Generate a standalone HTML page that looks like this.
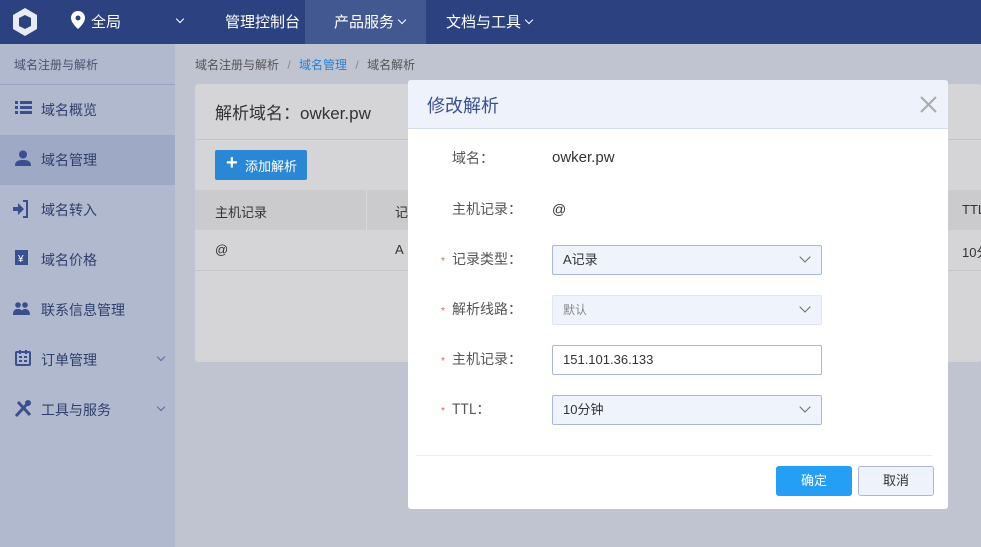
<!DOCTYPE html><html><head><meta charset="utf-8"><style>
*{margin:0;padding:0;box-sizing:border-box}
body{width:981px;height:547px;overflow:hidden;position:relative;background:#c0c4d0;font-family:"Liberation Sans","Noto Sans CJK SC",sans-serif;font-size:14px;color:#333}
.abs{position:absolute;white-space:nowrap}
.nav{left:0;top:0;width:981px;height:44px;background:#2b4180;color:#fff}
.nav span{position:absolute;top:11px;font-size:15px}
.side{left:0;top:44px;width:175px;height:503px;background:#b0b9cd}
.si{position:absolute;left:41px;font-size:14px;color:#2f3e6e}
.modal{left:408px;top:80px;width:540px;height:429px;background:#fff;border-radius:3px}
.lab{position:absolute;font-size:14px;color:#555;font-family:"Noto Sans CJK SC",sans-serif;line-height:20px}
.star{color:#e05a5a;font-size:10px;position:absolute}
.inp{position:absolute;left:144px;width:270px;height:30px;border:1px solid #a9b6de;border-radius:2px;background:#eff3fb;font-size:13px;color:#333;padding:0 10px;line-height:28px}
.chev{position:absolute;right:12px;top:7px;width:8px;height:8px;border-right:1.5px solid #666;border-bottom:1.5px solid #666;transform:rotate(45deg)}
.nch{display:inline-block;width:6px;height:6px;border-right:1.5px solid #fff;border-bottom:1.5px solid #fff;transform:rotate(45deg);margin-left:5px;position:relative;top:-4px}
</style></head><body>
<div class="abs nav">
<svg class="abs" style="left:11px;top:7px" width="28" height="30" viewBox="0 0 28 30"><path d="M14 1 L26 8 L26 22 L14 29 L2 22 L2 8Z" fill="#e8ebf3"/><path d="M8 11 L14 8 L20 11 L20 19 L14 22 L8 19Z" fill="#2b4180"/></svg>
<svg class="abs" style="left:71px;top:11px" width="14" height="18" viewBox="0 0 14 18"><path d="M7 0C3 0 0 3 0 7c0 5 7 11 7 11s7-6 7-11c0-4-3-7-7-7z" fill="#fff"/><circle cx="7" cy="7" r="2.5" fill="#2b4180"/></svg>
<span style="left:91px;font-size:15px">全局</span>
<span style="left:172px;top:13px"><i class="nch"></i></span>
<span style="left:225px">管理控制台</span>
<div class="abs" style="left:305px;top:0;width:121px;height:44px;background:#425891"></div>
<span style="left:334px">产品服务<i class="nch"></i></span>
<span style="left:446px">文档与工具<i class="nch"></i></span>
</div>
<div class="abs side">
<div class="abs" style="left:14px;top:12px;font-size:12px;color:#4a5270">域名注册与解析</div>
<div class="abs" style="left:0;top:40px;width:175px;height:1px;background:#97a3c6"></div>
<div class="abs" style="left:0;top:91px;width:175px;height:50px;background:#9ea9c6"></div>
</div>
<svg class="abs" style="left:15px;top:101px" width="17" height="14"><rect x="0" y="0" width="3" height="3" fill="#3a4f8f"/><rect x="5" y="0" width="12" height="3" fill="#3a4f8f"/><rect x="0" y="5" width="3" height="3" fill="#3a4f8f"/><rect x="5" y="5" width="12" height="3" fill="#3a4f8f"/><rect x="0" y="10" width="3" height="3" fill="#3a4f8f"/><rect x="5" y="10" width="12" height="3" fill="#3a4f8f"/></svg>
<svg class="abs" style="left:15px;top:150px" width="16" height="16"><circle cx="8" cy="4.5" r="4" fill="#3a4f8f"/><path d="M0 16c0-5 3-6 8-6s8 1 8 6z" fill="#3a4f8f"/></svg>
<svg class="abs" style="left:13px;top:200px" width="16" height="18"><path d="M0 7h5V3l6 6-6 6v-4H0z" fill="#3a4f8f"/><path d="M10 1h4v16h-4" stroke="#3a4f8f" stroke-width="2" fill="none"/></svg>
<svg class="abs" style="left:15px;top:250px" width="13" height="15"><rect width="13" height="15" fill="#3a4f8f"/><text x="3" y="12" font-size="10" fill="#fff">¥</text></svg>
<svg class="abs" style="left:13px;top:302px" width="17" height="13"><circle cx="5" cy="3" r="2.8" fill="#3a4f8f"/><circle cx="12" cy="3" r="2.8" fill="#3a4f8f"/><path d="M0 13c0-5 2-6 5-6s5 1 5 6zM8 13c0-5 2-6 4-6s5 1 5 6z" fill="#3a4f8f"/></svg>
<svg class="abs" style="left:15px;top:350px" width="16" height="16"><rect x="1" y="2" width="14" height="13" rx="1" stroke="#3a4f8f" stroke-width="2" fill="none"/><rect x="4" y="0" width="2" height="4" fill="#3a4f8f"/><rect x="10" y="0" width="2" height="4" fill="#3a4f8f"/><rect x="4" y="6" width="3" height="2" fill="#3a4f8f"/><rect x="9" y="6" width="3" height="2" fill="#3a4f8f"/><rect x="4" y="10" width="3" height="2" fill="#3a4f8f"/><rect x="9" y="10" width="3" height="2" fill="#3a4f8f"/></svg>
<svg class="abs" style="left:14px;top:400px" width="18" height="17"><path d="M2 16L14 3M4 2l12 13" stroke="#3a4f8f" stroke-width="3"/><circle cx="14" cy="3" r="3" fill="#3a4f8f"/></svg>
<div class="si" style="top:100px">域名概览</div>
<div class="si" style="top:150px">域名管理</div>
<div class="si" style="top:200px">域名转入</div>
<div class="si" style="top:250px">域名价格</div>
<div class="si" style="top:300px">联系信息管理</div>
<div class="si" style="top:350px">订单管理</div>
<div class="si" style="top:400px">工具与服务</div>
<div class="abs" style="left:158px;top:354px;width:6px;height:6px;border-right:1.5px solid #5a6aa0;border-bottom:1.5px solid #5a6aa0;transform:rotate(45deg)"></div>
<div class="abs" style="left:158px;top:404px;width:6px;height:6px;border-right:1.5px solid #5a6aa0;border-bottom:1.5px solid #5a6aa0;transform:rotate(45deg)"></div>
<div class="abs" style="left:195px;top:56px;font-size:12px;color:#555">域名注册与解析 <span style="color:#888;margin:0 5px">/</span> <span style="color:#2a7fd0">域名管理</span> <span style="color:#888;margin:0 5px">/</span> 域名解析</div>
<div class="abs" style="left:195px;top:84px;width:786px;height:278px;background:#d5d5d7;border-radius:3px"></div>
<div class="abs" style="left:195px;top:139px;width:786px;height:1px;background:#c4c4c8"></div>
<div class="abs" style="left:215px;top:100px;font-size:17px;color:#333;font-family:'Noto Sans CJK SC',sans-serif;line-height:24px">解析域名：<span style="font-family:'Liberation Sans'">owker.pw</span></div>
<div class="abs" style="left:215px;top:150px;width:92px;height:30px;background:#2a87d6;border-radius:2px;color:#fff;font-size:13px;padding:6px 0 0 30px">添加解析</div>
<div class="abs" style="left:226px;top:152px;color:#fff;font-size:20px;font-weight:bold">+</div>
<div class="abs" style="left:195px;top:190px;width:786px;height:40px;background:#cbcbce"></div>
<div class="abs" style="left:366px;top:190px;width:1px;height:40px;background:#d8d8da"></div>
<div class="abs" style="left:195px;top:270px;width:786px;height:1px;background:#c4c4c8"></div>
<div class="abs" style="left:215px;top:202px;font-size:13px">主机记录</div>
<div class="abs" style="left:395px;top:202px;font-size:13px">记</div>
<div class="abs" style="left:215px;top:242px;font-size:13px">@</div>
<div class="abs" style="left:395px;top:242px;font-size:13px">A</div>
<div class="abs" style="left:962px;top:202px;font-size:13px">TTL</div>
<div class="abs" style="left:962px;top:242px;font-size:13px">10分</div>
<div class="abs modal">
<div class="abs" style="left:0;top:0;width:540px;height:49px;background:#eef2fb;border-bottom:1px solid #d5dcee;border-radius:3px 3px 0 0"></div>
<div class="abs" style="left:19px;top:12px;font-size:18px;color:#3a4f8f;font-family:'Noto Sans CJK SC',sans-serif;line-height:26px">修改解析</div>
<svg class="abs" style="left:512px;top:16px" width="17" height="17"><path d="M1 1L16 16M16 1L1 16" stroke="#aaa" stroke-width="2"/></svg>
<div class="lab" style="left:44px;top:68px">域名：</div>
<div class="abs" style="left:144px;top:69px;font-size:15px">owker.pw</div>
<div class="lab" style="left:44px;top:119px">主机记录：</div>
<div class="abs" style="left:144px;top:121px;font-size:14px">@</div>
<span class="star" style="left:33px;top:176px">*</span><div class="lab" style="left:44px;top:169px">记录类型：</div>
<span class="star" style="left:33px;top:226px">*</span><div class="lab" style="left:44px;top:219px">解析线路：</div>
<span class="star" style="left:33px;top:276px">*</span><div class="lab" style="left:44px;top:269px">主机记录：</div>
<span class="star" style="left:33px;top:326px">*</span><div class="lab" style="left:44px;top:319px">TTL：</div>
<div class="inp" style="top:165px">A记录<div class="chev"></div></div>
<div class="inp" style="top:215px;border-color:#e2e6ef;color:#888;font-size:12px">默认<div class="chev"></div></div>
<div class="inp" style="top:265px;background:#fff">151.101.36.133</div>
<div class="inp" style="top:315px">10分钟<div class="chev"></div></div>
<div class="abs" style="left:8px;top:375px;width:516px;height:1px;background:#ecedf0"></div>
<div class="abs" style="left:368px;top:386px;width:76px;height:30px;background:#249ff5;border-radius:3px;color:#fff;font-size:13px;text-align:center;line-height:30px">确定</div>
<div class="abs" style="left:450px;top:386px;width:76px;height:30px;background:#eef2fb;border:1px solid #a9b6de;border-radius:3px;color:#333;font-size:13px;text-align:center;line-height:28px">取消</div>
</div>
</body></html>
